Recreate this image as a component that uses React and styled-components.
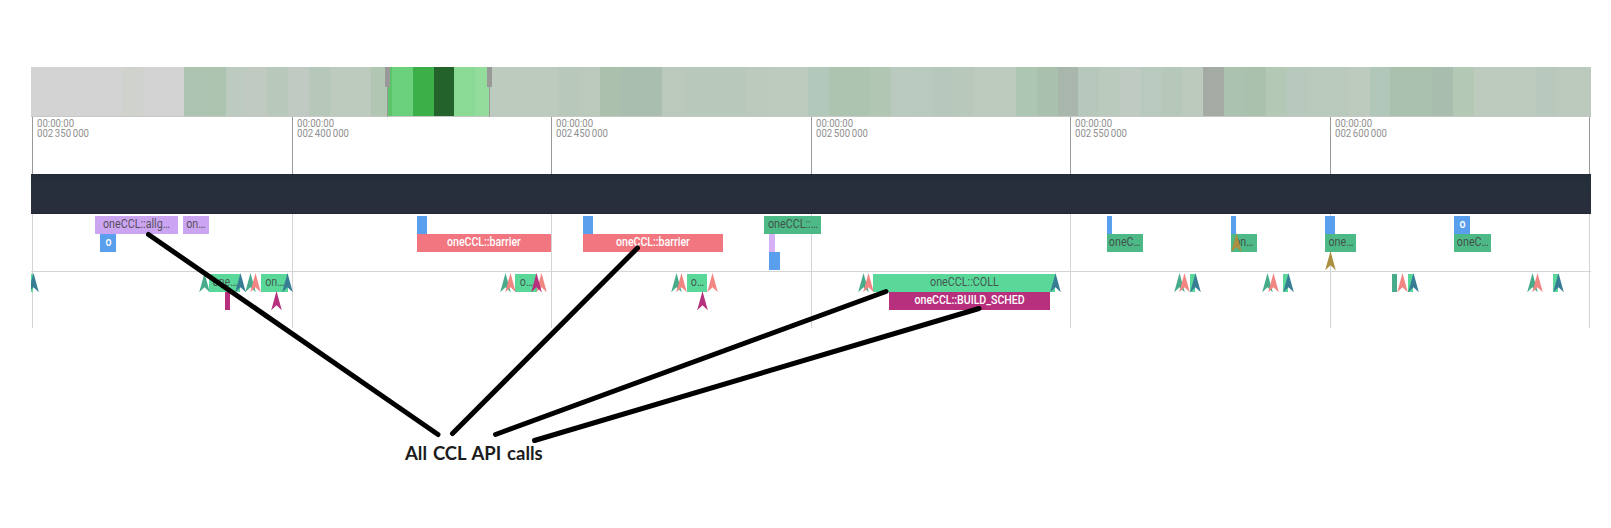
import React from "react";
import styled, { createGlobalStyle } from "styled-components";

const Global = createGlobalStyle`
  body { margin: 0; background: #fff; }
`;

const ORIGIN = 31;
const EDGE = 1591;

const Page = styled.main`
  box-sizing: border-box;
  position: relative;
  width: 1611px;
  height: 528px;
  padding: 67px 20px 0 31px;
  overflow: hidden;
  background: #fff;
  font-family: Roboto, "Liberation Sans", sans-serif;
`;

const Overview = styled.div`
  position: relative;
  display: flex;
  height: 49px;
  border-bottom: 1px solid #c6c8c6;
`;

const Bucket = styled.div`
  flex: 0 0 ${(p) => p.$w}px;
  background: ${(p) => p.$color};
`;

const Handle = styled.div`
  position: absolute;
  top: 0;
  left: ${(p) => p.$x - ORIGIN - 2}px;
  width: 5px;
  height: 20px;
  background: #999;
  &::after {
    content: "";
    position: absolute;
    left: 2px;
    top: 20px;
    width: 1px;
    height: 30px;
    background: #999;
  }
`;

const Ruler = styled.div`
  display: flex;
  height: 57px;
  padding-left: 1px;
`;

const Tick = styled.div`
  box-sizing: border-box;
  flex: 0 0 ${(p) => p.$w}px;
  border-left: 1px solid #999;
  padding: 2px 0 0 4px;
  color: #8f8f8f;
  font-size: 10.8px;
  line-height: 10px;
`;

const TickText = styled.div`
  white-space: nowrap;
  word-spacing: -0.8px;
  transform: scaleX(0.89);
  transform-origin: 0 0;
`;

const Band = styled.div`
  box-sizing: border-box;
  height: 40px;
  background: linear-gradient(#252c39, #26303b 40%, #282e3c 65%, #282e3c);
  border-bottom: 1px solid #202733;
`;

const Tracks = styled.div`
  position: relative;
  height: 114px;
  overflow: hidden;
`;

const Grid = styled.div`
  position: absolute;
  inset: 0;
  display: flex;
  padding-left: 1px;
`;

const GridCell = styled.div`
  box-sizing: border-box;
  flex: 0 0 ${(p) => p.$w}px;
  border-left: 1px solid #d4d4d4;
`;

const Track = styled.div`
  position: relative;
  box-sizing: border-box;
  height: ${(p) => p.$h}px;
  padding-top: 2px;
  border-bottom: ${(p) => (p.$line ? "1px solid #d4d4d4" : "0")};
`;

const Lane = styled.div`
  position: relative;
  height: 18px;
`;

const Slice = styled.div`
  position: absolute;
  top: 0;
  left: ${(p) => p.$x - ORIGIN}px;
  width: ${(p) => p.$w}px;
  height: 18px;
  display: flex;
  justify-content: center;
  background: ${(p) => p.$color};
  color: ${(p) => (p.$light ? "#fff" : "#404040dd")};
  font-size: 12px;
  font-weight: ${(p) => (p.$light ? 500 : 400)};
  line-height: 17px;
  white-space: nowrap;
`;

const SliceText = styled.span`
  flex: none;
  transform: scaleX(${(p) => p.$s});
`;

const Marker = styled.svg`
  position: absolute;
  top: -1px;
  left: ${(p) => p.$x - ORIGIN - 5.5}px;
  width: 11px;
  height: 20px;
  fill: ${(p) => p.$color};
`;

const Callouts = styled.svg`
  position: absolute;
  inset: 0;
  stroke: #000;
  stroke-width: 5;
  stroke-linecap: round;
`;

const Caption = styled.div`
  width: max-content;
  margin: 113px 0 0 374px;
  color: #1c1c1c;
  font: 700 18.5px/24px Lato, "Open Sans", sans-serif;
  word-spacing: 1.4px;
`;

const C = {
  purple: "#cca5f2",
  lilac: "#d6b0f5",
  blue: "#5a9eee",
  coral: "#f17680",
  green: "#4db986",
  mint: "#5ad89a",
  magenta: "#b7307d",
  teal: "#47ab8c",
  salmon: "#f28683",
  navy: "#377d94",
  gold: "#a98f3f",
};

const buckets = [
  [31, "#d3d3d3"], [122, "#d0d2ce"], [143, "#d3d3d3"], [184, "#abc3b0"], [205, "#abc3af"],
  [226, "#bdcabf"], [246, "#c0cac1"], [267, "#b8c9bc"], [288, "#c0cac2"], [309, "#b6c8b9"],
  [330, "#bdcabe"], [371, "#b2c6b4"], [388, "#5cc56a"], [392, "#6bd07b"], [413, "#3daf49"],
  [434, "#23622a"], [454, "#8ad994"], [475, "#93dc9b"], [489, "#bdcabe"], [558, "#b8c8bb"],
  [579, "#bbc9bd"], [600, "#abc1ae"], [621, "#aabeb0"], [662, "#bbc9bd"], [683, "#b8c8bb"],
  [746, "#bbcabd"], [770, "#bdcabe"], [808, "#b2c8bb"], [829, "#adc5b0"], [870, "#b1c7b4"],
  [891, "#bacabe"], [912, "#b8c9bd"], [933, "#b6c8bb"], [953, "#b8c9bc"], [974, "#bdcabe"],
  [1016, "#adc6b4"], [1037, "#aac0ae"], [1058, "#a8b6ab"], [1078, "#b6c8bb"], [1099, "#bacabd"],
  [1120, "#bfcbc2"], [1141, "#b8cabd"], [1162, "#b5c8ba"], [1182, "#bcc9bd"], [1203, "#a4aaa4"],
  [1224, "#abc2b0"], [1245, "#aac1ae"], [1266, "#b3c8b5"], [1286, "#b7c8bc"], [1307, "#b9c9bc"],
  [1349, "#bdcabe"], [1370, "#b1c7b9"], [1390, "#abc1af"], [1432, "#a9bdaf"], [1453, "#b3c8b5"],
  [1474, "#bdcabe"], [1536, "#b8c8bc"], [1557, "#bccabe"], [1577, "#bccabd"],
];

const ticks = [
  [32, "350"], [292, "400"], [551, "450"], [811, "500"], [1070, "550"], [1330, "600"], [1589, null],
];

const widthAt = (list, i) => (i + 1 < list.length ? list[i + 1][0] : EDGE) - list[i][0];

// Each slice is [start, end, color, label, light text].
const upper = [
  {
    slices: [
      [95, 178.4, "purple", "oneCCL::allg…"], [183, 209, "purple", "on…"],
      [417, 427.4, "blue"], [583, 593.4, "blue"], [764, 821, "green", "oneCCL::…"],
      [1107, 1112.4, "blue"], [1231, 1236.4, "blue"], [1325, 1335.4, "blue"],
      [1454, 1470.4, "blue", "o", true],
    ],
  },
  {
    slices: [
      [100, 116, "blue", "o", true], [417, 551.4, "coral", "oneCCL::barrier", true],
      [583, 723, "coral", "oneCCL::barrier", true], [769, 775, "lilac"],
      [1107, 1143.4, "green", "oneC…"], [1231, 1257.4, "green", "on…"],
      [1325, 1356, "green", "one…"], [1454, 1491, "green", "oneC…"],
    ],
    markers: [[1236.5, "gold"]],
  },
  { slices: [[769, 780, "blue"]], markers: [[1330.3, "gold"]] },
];

const lower = [
  {
    slices: [
      [31, 33, "mint"], [209, 240, "mint", "one…"], [261, 288, "mint", "on…"],
      [515, 537, "mint", "o…"], [687, 707, "mint", "o…"], [873, 1055, "mint", "oneCCL::COLL"],
      [1190, 1195.4, "mint"], [1283, 1288.4, "mint"], [1392, 1397.4, "teal"],
      [1408, 1413.4, "mint"], [1553, 1558.4, "mint"],
    ],
    markers: [
      [33, "navy"], [204.3, "teal"], [240, "navy"], [250.5, "teal"], [255.8, "salmon"],
      [287.5, "navy"], [505, "teal"], [510.5, "salmon"], [541, "salmon"], [536.5, "magenta"],
      [676.5, "teal"], [681.5, "salmon"], [712.5, "salmon"], [863.2, "teal"], [868.5, "salmon"],
      [1055.2, "navy"], [1179.3, "teal"], [1184.5, "salmon"], [1195.5, "navy"],
      [1267.5, "teal"], [1273, "salmon"], [1288.5, "navy"], [1402.5, "salmon"],
      [1413.2, "navy"], [1532.5, "teal"], [1537.5, "salmon"], [1558.5, "navy"],
    ],
  },
  {
    slices: [[225, 230, "magenta"], [889, 1050, "magenta", "oneCCL::BUILD_SCHED", true]],
    markers: [[276.5, "magenta"], [702.5, "magenta"]],
  },
];

const Lanes = ({ lanes }) =>
  lanes.map((lane, i) => (
    <Lane key={i}>
      {lane.slices.map(([a, b, color, label, light]) => (
        <Slice key={a} $x={a} $w={b - a} $color={C[color]} $light={light}>
          {label && <SliceText $s={light ? 0.88 : 0.895}>{label}</SliceText>}
        </Slice>
      ))}
      {(lane.markers || []).map(([x, color]) => (
        <Marker key={x} $x={x} $color={C[color]} viewBox="0 0 11 20">
          <path d="M5.5 0L10.8 19.3L5.5 14.3L0.2 19.3Z" />
        </Marker>
      ))}
    </Lane>
  ));

export default function App() {
  return (
    <Page>
      <Global />
      <Overview>
        {buckets.map(([x, color], i) => (
          <Bucket key={x} $w={widthAt(buckets, i)} $color={color} />
        ))}
        <Handle $x={387} />
        <Handle $x={489} />
      </Overview>
      <Ruler>
        {ticks.map(([x, t], i) => (
          <Tick key={x} $w={widthAt(ticks, i)}>
            {t && <TickText>00:00:00</TickText>}
            {t && <TickText>{`002 ${t} 000`}</TickText>}
          </Tick>
        ))}
      </Ruler>
      <Band />
      <Tracks>
        <Grid>
          {ticks.map(([x], i) => (
            <GridCell key={x} $w={widthAt(ticks, i)} />
          ))}
        </Grid>
        <Track $h={58} $line>
          <Lanes lanes={upper} />
        </Track>
        <Track $h={56}>
          <Lanes lanes={lower} />
        </Track>
      </Tracks>
      <Caption>All CCL API calls</Caption>
      <Callouts width="1611" height="528">
        <path d="M148.5 234.5L438 434.5" />
        <path d="M637.5 248L452.5 433.5" />
        <path d="M886 291.5L495.5 434.5" />
        <path d="M979 308.5L534.5 440.5" />
      </Callouts>
    </Page>
  );
}
